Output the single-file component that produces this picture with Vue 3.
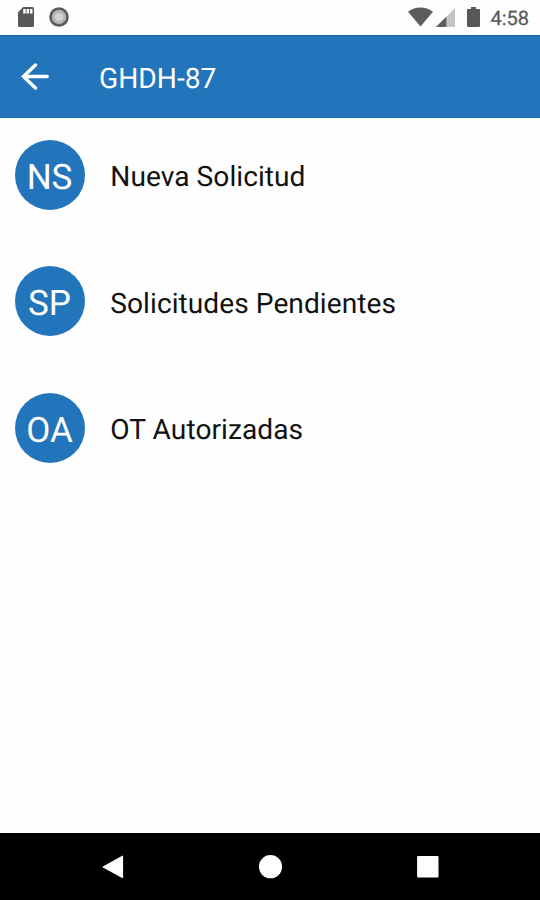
<template>
  <div class="screen">
    <header class="status-bar">
      <div class="status-left">
        <svg class="icon-sd" viewBox="0 0 16 20" aria-hidden="true">
          <path d="M5.2 0H14.5Q16 0 16 1.5V18.5Q16 20 14.5 20H1.5Q0 20 0 18.5V5.2Z" fill="#585858" />
          <path d="M5.2 2h2.5v4.5h-2.5zM8.6 2h2.5v4.5h-2.5zM12 2h2.5v4.5h-2.5z" fill="#fff" />
        </svg>
        <svg class="icon-sync" viewBox="0 0 20 20" aria-hidden="true">
          <circle cx="10" cy="10" r="8.5" fill="#b5b5b5" stroke="#5c5c5c" stroke-width="2.6" />
          <circle cx="10" cy="10" r="4.3" fill="#d2d2d2" />
        </svg>
      </div>
      <div class="status-right">
        <svg class="icon-wifi" viewBox="0 0 25 20" aria-hidden="true">
          <path d="M12.5 19.5L0 4.8C7 -1.1 18 -1.1 25 4.8Z" fill="#5c5c5c" />
        </svg>
        <svg class="icon-signal" viewBox="0 0 19 19" aria-hidden="true">
          <path d="M19 0V19H0Z" fill="#c4c4c4" />
          <path d="M10.3 8.7V19H0Z" fill="#5c5c5c" />
        </svg>
        <svg class="icon-battery" viewBox="0 0 13 20" aria-hidden="true">
          <path d="M4 0H9V2H12Q13 2 13 3V19Q13 20 12 20H1Q0 20 0 19V3Q0 2 1 2H4Z" fill="#585858" />
        </svg>
        <span class="clock">4:58</span>
      </div>
    </header>

    <div class="app-bar">
      <svg class="icon-back" viewBox="0 0 28 28" aria-hidden="true">
        <path d="M14.5 2L2.5 13.5L14.5 25M3 13.5H26.2" />
      </svg>
      <h1 class="title">GHDH-87</h1>
    </div>

    <ul class="list">
      <li v-for="item in items" :key="item.initials" class="row">
        <span class="avatar">{{ item.initials }}</span>
        <span class="label">{{ item.label }}</span>
      </li>
    </ul>

    <nav class="nav-bar">
      <svg class="nav-icon" viewBox="0 0 24 24" aria-hidden="true">
        <path d="M2.2 12L21.5 1.2V22.4Z" stroke="#fff" stroke-width="1.2" stroke-linejoin="round" />
      </svg>
      <svg class="nav-icon" viewBox="0 0 24 24" aria-hidden="true">
        <circle cx="11.5" cy="11.7" r="11.6" />
      </svg>
      <svg class="nav-icon" viewBox="0 0 24 24" aria-hidden="true">
        <rect x="1.1" y="1" width="21.4" height="21.6" rx="1" />
      </svg>
    </nav>
  </div>
</template>

<script setup>
const items = [
  { initials: 'NS', label: 'Nueva Solicitud' },
  { initials: 'SP', label: 'Solicitudes Pendientes' },
  { initials: 'OA', label: 'OT Autorizadas' },
];
</script>

<style>
body {
  margin: 0;
  background: #fff;
}
</style>

<style scoped>
.screen {
  display: flex;
  flex-direction: column;
  width: 540px;
  height: 900px;
  overflow: hidden;
  background: #fefefe;
  font-family: Roboto, sans-serif;
  text-rendering: geometricPrecision;
}

.status-bar {
  display: flex;
  justify-content: space-between;
  height: 35px;
  box-sizing: border-box;
  padding: 7px 11px 0 18px;
}

.status-left,
.status-right {
  display: flex;
  align-items: flex-start;
}

.icon-sd {
  width: 16px;
  height: 20px;
}

.icon-sync {
  width: 20px;
  height: 20px;
  margin-left: 15.4px;
}

.icon-wifi {
  width: 25px;
  height: 20px;
}

.icon-signal {
  width: 19px;
  height: 19px;
  margin: 1px 0 0 3px;
}

.icon-battery {
  width: 13px;
  height: 20px;
  margin-left: 12px;
}

.clock {
  margin-left: 10px;
  color: #5c5c5c;
  font-size: 20px;
  line-height: 23px;
  -webkit-text-stroke: 0.3px #5c5c5c;
}

.app-bar {
  display: flex;
  align-items: center;
  height: 83px;
  box-sizing: border-box;
  padding-left: 21px;
  background: #2274bb;
  box-shadow: inset 0 1px #1266b2, inset 0 -1px #1266b2;
  color: #fff;
}

.icon-back {
  width: 28px;
  height: 28px;
  fill: none;
  stroke: #fff;
  stroke-width: 3.4;
  stroke-linecap: round;
}

.title {
  margin: 4px 0 0 50px;
  font-size: 28.2px;
  font-weight: 400;
  line-height: 34px;
}

.list {
  flex: 1;
  margin: 0;
  padding: 21.7px 0 0 14.5px;
  list-style: none;
}

.row {
  display: flex;
  align-items: center;
  height: 70px;
  margin-bottom: 56.5px;
}

.avatar {
  display: flex;
  align-items: center;
  justify-content: center;
  width: 70px;
  height: 70px;
  box-sizing: border-box;
  padding-top: 4.7px;
  border-radius: 50%;
  background: #2274bb;
  color: #fff;
  font-size: 35px;
}

.label {
  margin: 3.7px 0 0 25.8px;
  color: #111;
  font-size: 28.1px;
  letter-spacing: 0.06px;
  white-space: nowrap;
}

.nav-bar {
  display: flex;
  justify-content: space-between;
  height: 67px;
  box-sizing: border-box;
  padding: 22px 100px 0 101px;
  background: #000;
}

.nav-icon {
  width: 24px;
  height: 24px;
  fill: #fff;
}
</style>
